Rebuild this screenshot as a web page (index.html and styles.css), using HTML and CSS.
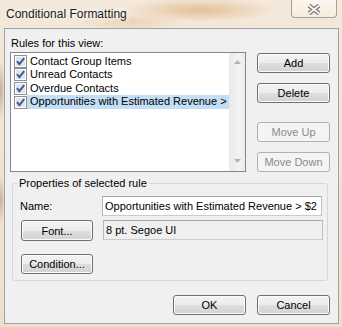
FILE: index.html
```html
<!DOCTYPE html>
<html lang="en">
<head>
<meta charset="utf-8">
<title>Conditional Formatting</title>
<link rel="stylesheet" href="styles.css">
</head>
<body>
<div class="window">
  <div class="titlebar">
    <span class="title">Conditional Formatting</span>
    <button class="close" aria-label="Close">
      <svg width="16" height="11" viewBox="0 0 16 11">
        <path d="M3 1.5 L13 9.5 M13 1.5 L3 9.5" stroke="#707070" stroke-width="4.2" fill="none"/>
        <path d="M3 1.5 L13 9.5 M13 1.5 L3 9.5" stroke="#f4f4f4" stroke-width="2" fill="none"/>
      </svg>
    </button>
  </div>
  <div class="client">
    <div class="rules-label">Rules for this view:</div>
    <div class="rules-row">
      <div class="listbox">
        <ul class="items">
          <li><svg class="check" viewBox="0 0 13 13"><rect x="0.5" y="0.5" width="12" height="12" fill="#fff" stroke="#8e8f8f"/><rect x="2" y="2" width="9" height="9" fill="#e1e5ea"/><path d="M3 6.2 L5.4 9.2 L10.2 3.2" stroke="#3f5c94" stroke-width="2" fill="none"/></svg><span class="text">Contact Group Items</span></li>
          <li><svg class="check" viewBox="0 0 13 13"><rect x="0.5" y="0.5" width="12" height="12" fill="#fff" stroke="#8e8f8f"/><rect x="2" y="2" width="9" height="9" fill="#e1e5ea"/><path d="M3 6.2 L5.4 9.2 L10.2 3.2" stroke="#3f5c94" stroke-width="2" fill="none"/></svg><span class="text">Unread Contacts</span></li>
          <li><svg class="check" viewBox="0 0 13 13"><rect x="0.5" y="0.5" width="12" height="12" fill="#fff" stroke="#8e8f8f"/><rect x="2" y="2" width="9" height="9" fill="#e1e5ea"/><path d="M3 6.2 L5.4 9.2 L10.2 3.2" stroke="#3f5c94" stroke-width="2" fill="none"/></svg><span class="text">Overdue Contacts</span></li>
          <li class="selected"><svg class="check" viewBox="0 0 13 13"><rect x="0.5" y="0.5" width="12" height="12" fill="#fff" stroke="#8e8f8f"/><rect x="2" y="2" width="9" height="9" fill="#e1e5ea"/><path d="M3 6.2 L5.4 9.2 L10.2 3.2" stroke="#3f5c94" stroke-width="2" fill="none"/></svg><span class="text">Opportunities with Estimated Revenue &gt;</span></li>
        </ul>
        <div class="vscroll">
          <svg width="7" height="4" viewBox="0 0 7 4"><path d="M0 4 L3.5 0 L7 4 Z" fill="#b4b4b4"/></svg>
          <svg width="7" height="4" viewBox="0 0 7 4"><path d="M0 0 L3.5 4 L7 0 Z" fill="#b4b4b4"/></svg>
        </div>
      </div>
      <div class="side-buttons">
        <button class="btn add">Add</button>
        <button class="btn delete">Delete</button>
        <button class="btn move-up" disabled>Move Up</button>
        <button class="btn move-down" disabled>Move Down</button>
      </div>
    </div>
    <fieldset class="props">
      <legend>Properties of selected rule</legend>
      <div class="prop-row">
        <span class="name-label">Name:</span>
        <div class="field">Opportunities with Estimated Revenue &gt; $2</div>
      </div>
      <div class="prop-row font-row">
        <button class="btn">Font...</button>
        <div class="field readonly">8 pt. Segoe UI</div>
      </div>
      <div class="prop-row cond-row">
        <button class="btn">Condition...</button>
      </div>
    </fieldset>
    <div class="footer">
      <button class="btn">OK</button>
      <button class="btn">Cancel</button>
    </div>
  </div>
</div>
</body>
</html>
```
FILE: styles.css
```css
* { box-sizing: border-box; }
html, body { margin: 0; padding: 0; }
body {
  width: 342px;
  height: 327px;
  overflow: hidden;
  font: 11px/13px "Liberation Sans", Arial, sans-serif;
  color: #000;
  background:
    radial-gradient(ellipse 75px 12px at 200px 10px, rgba(214,160,100,.55), rgba(214,160,100,0)),
    radial-gradient(ellipse 50px 9px at 130px 22px, rgba(225,185,140,.45), rgba(225,185,140,0)),
    radial-gradient(ellipse 4px 30px at 1px 90px, rgba(150,120,90,.5), rgba(150,120,90,0)),
    radial-gradient(ellipse 4px 25px at 1px 200px, rgba(150,120,90,.45), rgba(150,120,90,0)),
    linear-gradient(180deg, #f3e8da 0%, #efdfca 100%);
}
.window { display: flex; flex-direction: column; height: 327px; }
.titlebar {
  height: 28px;
  display: flex;
  justify-content: space-between;
  align-items: flex-start;
  padding-left: 6px;
}
.title {
  font-size: 12px;
  line-height: 28px;
  color: #1a1a1a;
  text-shadow: 0 0 6px #fff, 0 0 10px rgba(255,255,255,.9);
}
.close {
  width: 46px;
  height: 18px;
  margin-right: 5px;
  padding: 2px 0 0;
  border: 1px solid #ad9f8e;
  border-top: none;
  border-radius: 0 0 4px 4px;
  background: linear-gradient(rgba(255,251,245,.75), rgba(250,238,222,.6));
  display: flex;
  align-items: center;
  justify-content: center;
}
.client {
  margin-left: 4px;
  width: 335px;
  height: 296px;
  border: 1px solid #9ea2a6;
  background: #f0f0f0;
  padding: 8px 8px 8px 5px;
}
.rules-label { margin-left: 1px; height: 13px; }
.rules-row { display: flex; gap: 11px; margin-top: 2px; height: 120px; }
.listbox {
  width: 236px;
  height: 120px;
  border: 1px solid #828790;
  background: #fff;
  display: flex;
}
.items { list-style: none; margin: 0; padding: 1.5px 0 0 3px; flex: 1; }
.items li { height: 13.67px; display: flex; align-items: center; }
.check { width: 13px; height: 13px; display: block; flex: none; }
.items .text { padding: 0 2px 0 3px; line-height: 13.67px; white-space: nowrap; }
.items li.selected .text { background: #c3def5; }
.vscroll {
  width: 16px;
  background: linear-gradient(90deg, #e9e9e9, #f3f3f3 60%, #ececec);
  display: flex;
  flex-direction: column;
  justify-content: space-between;
  align-items: center;
  padding: 7px 0 8px;
}
.vscroll svg { display: block; }
.side-buttons { width: 73px; display: flex; flex-direction: column; }
.btn {
  font: 11px/18px "Liberation Sans", Arial, sans-serif;
  color: #000;
  height: 20px;
  padding: 0;
  border: 1px solid #707070;
  border-radius: 3px;
  background: linear-gradient(#f3f3f3, #ececec 50%, #dedede 50%, #d2d2d2);
  box-shadow: inset 0 0 0 1px #fbfbfb;
}
.btn:disabled {
  color: #8a8a8a;
  border-color: #adb2b5;
  background: #f4f4f4;
  box-shadow: none;
}
.side-buttons .btn { width: 73px; }
.add { margin-top: 1px; }
.delete { margin-top: 10px; }
.move-up { margin-top: 19px; }
.move-down { margin-top: 10px; }
.props {
  margin: 5px 2px 0;
  padding: 6px 4px 6px 8px;
  border: 1px solid #d2d8dd;
  border-radius: 3px;
  min-width: 0;
}
.props legend { padding: 0 2px; margin-left: -4px; line-height: 13px; }
.prop-row { display: flex; gap: 10px; align-items: flex-start; }
.name-label { width: 72px; line-height: 20px; margin-left: -1px; }
.prop-row .btn { width: 72px; }
.font-row { margin-top: 4px; }
.font-row .btn { height: 21px; }
.cond-row { margin-top: 13px; }
.field {
  width: 220px;
  height: 20px;
  border: 1px solid;
  border-color: #a4a8ae #bcc0c6 #c8ccd2 #b4b8be;
  background: #fff;
  padding: 0 0 0 2px;
  line-height: 18px;
  white-space: nowrap;
  overflow: hidden;
}
.field.readonly { background: #f0f0f0; }
.footer { display: flex; justify-content: flex-end; gap: 11px; margin-top: 14px; }
.footer .btn { width: 73px; }
```
